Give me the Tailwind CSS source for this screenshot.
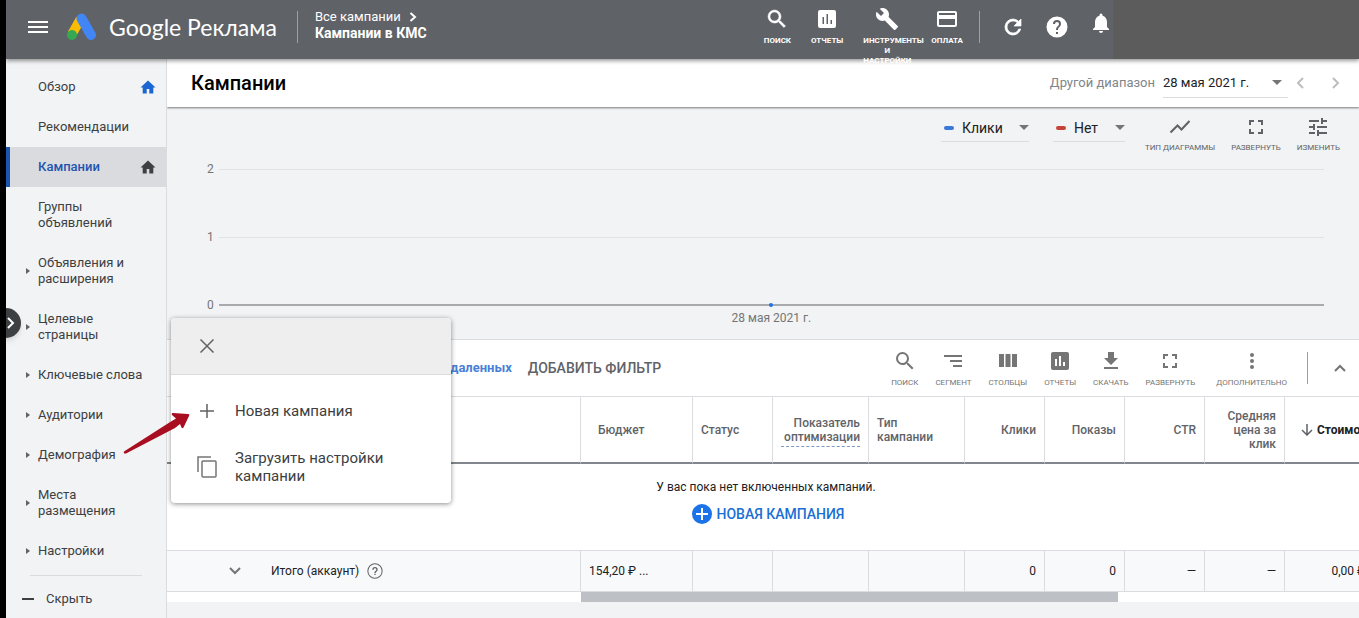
<!DOCTYPE html>
<html lang="ru">
<head>
  <meta charset="UTF-8"/>
  <meta name="viewport" content="width=device-width, initial-scale=1.0"/>
  <title>Кампании</title>
  <script src="https://cdn.jsdelivr.net/npm/@tailwindcss/browser@4"></script>
</head>
<body class="flex min-h-screen overflow-hidden bg-[#f1f3f4] font-['Roboto',sans-serif] text-[#3c4043]">
  <div class="z-40 w-1.5 shrink-0 bg-black"></div>

  <div class="relative flex min-w-0 flex-1 flex-col">
    <!-- Top bar -->
    <header class="relative z-30 flex h-[59px] bg-[#5f6368] text-white shadow-[0_2px_4px_rgba(0,0,0,0.4)]">
      <button aria-label="Меню" class="ml-5 mt-[15px] h-6 w-6">
        <svg viewBox="0 0 24 24" class="h-6 w-6" fill="currentColor"><path d="M2 6h20v2H2zm0 5h20v2H2zm0 5h20v2H2z"/></svg>
      </button>
      <a href="#" class="ml-4 flex h-[54px] items-center gap-3">
        <svg viewBox="0 0 30 28" class="h-7 w-[31px]">
          <path d="M14 6 5.500 21" stroke="#fbbc04" stroke-width="9.500"/>
          <path d="M15 5.500 24.500 22" stroke="#4285f4" stroke-width="10" stroke-linecap="round"/>
          <circle cx="5.500" cy="22" r="5" fill="#34a853"/>
        </svg>
        <span class="font-['Lato','Open_Sans',sans-serif] text-[23px] whitespace-nowrap">Google Реклама</span>
      </a>
      <div class="ml-5 mt-[11px] h-8 w-px bg-[#9aa0a6]"></div>
      <div class="ml-[17px] mt-2 whitespace-nowrap">
        <a href="#" class="flex items-center gap-2 text-[13px] leading-[17px]">Все кампании
          <svg viewBox="0 0 8 10" class="h-2.5 w-2" fill="none" stroke="currentColor" stroke-width="2"><path d="M1.500 1 6 5 1.500 9"/></svg>
        </a>
        <div class="text-sm leading-[17px] font-bold">Кампании в КМС</div>
      </div>

      <div class="ml-auto flex items-start gap-5 pt-[7px] text-[8px] leading-[10px] font-bold">
        <button class="flex flex-col items-center gap-[5px]">
          <svg viewBox="0 0 24 24" class="h-6 w-6" fill="currentColor"><path d="M15.500 14h-.79l-.28-.27A6.470 6.470 0 0 0 16 9.500 6.500 6.500 0 1 0 9.500 16c1.610 0 3.090-.59 4.230-1.570l.27.28v.79l5 4.990L20.490 19l-4.990-5zm-6 0C7.010 14 5 11.990 5 9.500S7.010 5 9.500 5 14 7.010 14 9.500 11.990 14 9.500 14z" stroke="currentColor" stroke-width=".5"/></svg>
          ПОИСК
        </button>
        <button class="flex flex-col items-center gap-[5px]">
          <svg viewBox="0 0 24 24" class="h-6 w-6" fill="currentColor"><path d="M19 3H5a2 2 0 0 0-2 2v14a2 2 0 0 0 2 2h14a2 2 0 0 0 2-2V5a2 2 0 0 0-2-2zM9 17H7.500v-7H9v7zm4 0h-1.500V7H13v10zm4 0h-1.500v-4H17v4z"/></svg>
          ОТЧЕТЫ
        </button>
        <button class="flex w-12 flex-col items-center gap-[5px]">
          <svg viewBox="0 0 24 24" class="h-6 w-6" fill="currentColor"><path d="M22.700 19l-9.100-9.100c.9-2.300.4-5-1.500-6.900-2-2-5-2.400-7.400-1.300L9 6 6 9 1.600 4.700C.4 7.100.9 10.100 2.900 12.100c1.900 1.900 4.600 2.400 6.900 1.500l9.100 9.100c.4.4 1 .4 1.400 0l2.300-2.300c.5-.4.5-1.100.1-1.400z"/></svg>
          <span class="w-12">ИНСТРУМЕНТЫ И НАСТРОЙКИ</span>
        </button>
        <button class="flex flex-col items-center gap-[5px]">
          <svg viewBox="0 0 24 24" class="h-6 w-6" fill="currentColor"><path d="M20 4H4c-1.110 0-1.990.89-1.990 2L2 18c0 1.110.89 2 2 2h16c1.110 0 2-.89 2-2V6c0-1.110-.89-2-2-2zm0 14H4v-6h16v6zm0-10H4V6h16v2z"/></svg>
          ОПЛАТА
        </button>
      </div>
      <div class="ml-4 mt-[11px] h-8 w-px bg-[#9aa0a6]"></div>
      <div class="ml-[21px] flex items-start gap-5 pt-[15px]">
        <button aria-label="Обновить"><svg viewBox="0 0 24 24" class="h-6 w-6" fill="currentColor"><path d="M17.650 6.350A7.958 7.958 0 0 0 12 4a8 8 0 1 0 7.730 10h-2.080A5.990 5.990 0 0 1 12 18a6 6 0 1 1 0-12c1.660 0 3.140.69 4.220 1.780L13 11h7V4l-2.350 2.350z" stroke="currentColor" stroke-width=".7"/></svg></button>
        <button aria-label="Справка"><svg viewBox="0 0 24 24" class="h-6 w-6" fill="currentColor"><path d="M12 1.500a10.500 10.500 0 1 0 0 21 10.500 10.500 0 0 0 0-21zm1 17.500h-2v-2h2v2zm2.070-7.750-.9.920C13.450 12.900 13 13.500 13 15h-2v-.5c0-1.100.45-2.100 1.170-2.830l1.240-1.260c.37-.36.59-.86.59-1.410a2 2 0 1 0-4 0H8a4 4 0 1 1 8 0c0 .88-.36 1.680-.93 2.250z"/></svg></button>
        <button aria-label="Уведомления" class="-mt-1"><svg viewBox="0 0 24 24" class="h-6 w-6" fill="currentColor"><path d="M12 22c1.100 0 2-.9 2-2h-4a2 2 0 0 0 2 2zm6-6v-5c0-3.070-1.640-5.640-4.500-6.320V4a1.500 1.500 0 0 0-3 0v.68C7.630 5.360 6 7.920 6 11v5l-2 2v1h16v-1l-2-2z"/></svg></button>
      </div>
      <div class="w-[246px] shrink-0 bg-[#5c5c5c]"></div>
    </header>

    <div class="flex flex-1">
      <!-- Side navigation -->
      <nav class="relative z-20 w-[161px] shrink-0 border-r border-[#dadce0] pt-2 text-[13px] leading-4">
        <a href="#" class="flex items-center py-3 pl-8 pr-2.5">Обзор
          <svg viewBox="0 0 16 16" class="ml-auto h-4 w-4" fill="#1a66d2"><path d="M8 1.500 .5 8.500h2.200V14.500h4V10h2.600v4.500h4V8.500h2.200z"/></svg>
        </a>
        <a href="#" class="block py-3 pl-8">Рекомендации</a>
        <a href="#" class="flex items-center border-l-4 border-[#1a56b0] bg-[#dadbdf] py-3 pl-7 pr-2.5 font-medium text-[#1f55b0]">Кампании
          <svg viewBox="0 0 16 16" class="ml-auto h-4 w-4" fill="#3c4043"><path d="M8 1.500 .5 8.500h2.200V14.500h4V10h2.600v4.500h4V8.500h2.200z"/></svg>
        </a>
        <a href="#" class="block py-3 pl-8">Группы<br>объявлений</a>
        <a href="#" class="flex items-center gap-2 py-3 pl-5"><svg viewBox="0 0 4 6" class="h-1.5 w-1" fill="#5f6368"><path d="M0 0l4 3-4 3z"/></svg><span>Объявления и<br>расширения</span></a>
        <a href="#" class="flex items-center gap-2 py-3 pl-5"><svg viewBox="0 0 4 6" class="h-1.5 w-1" fill="#5f6368"><path d="M0 0l4 3-4 3z"/></svg><span>Целевые<br>страницы</span></a>
        <a href="#" class="flex items-center gap-2 py-3 pl-5"><svg viewBox="0 0 4 6" class="h-1.5 w-1" fill="#5f6368"><path d="M0 0l4 3-4 3z"/></svg>Ключевые слова</a>
        <a href="#" class="flex items-center gap-2 py-3 pl-5"><svg viewBox="0 0 4 6" class="h-1.5 w-1" fill="#5f6368"><path d="M0 0l4 3-4 3z"/></svg>Аудитории</a>
        <a href="#" class="flex items-center gap-2 py-3 pl-5"><svg viewBox="0 0 4 6" class="h-1.5 w-1" fill="#5f6368"><path d="M0 0l4 3-4 3z"/></svg>Демография</a>
        <a href="#" class="flex items-center gap-2 py-3 pl-5"><svg viewBox="0 0 4 6" class="h-1.5 w-1" fill="#5f6368"><path d="M0 0l4 3-4 3z"/></svg><span>Места<br>размещения</span></a>
        <a href="#" class="flex items-center gap-2 py-3 pl-5"><svg viewBox="0 0 4 6" class="h-1.5 w-1" fill="#5f6368"><path d="M0 0l4 3-4 3z"/></svg>Настройки</a>
        <hr class="ml-6 mr-6 mt-1 border-[#dadce0]">
        <button class="flex items-center gap-3 pl-4 pt-[15px]"><span class="h-0.5 w-3 bg-[#3c4043]"></span>Скрыть</button>

        <!-- Drawer handle -->
        <button aria-label="Открыть панель" class="absolute -left-[15px] top-[249px] flex h-[30px] w-[30px] items-center justify-end rounded-full bg-[#3c4043] pr-1.5 text-white shadow-md">
          <svg viewBox="0 0 8 12" class="h-3 w-2" fill="none" stroke="currentColor" stroke-width="2"><path d="M1 1l5 5-5 5"/></svg>
        </button>
        <!-- Pointer to the new campaign item -->
        <svg viewBox="0 0 68 46" class="pointer-events-none absolute left-[116px] top-[351px] h-[46px] w-[68px]" fill="#a80d20"><path d="M2 41.500 49 11.500 54 8.500 50 5Q49 3 51 3L66 4Q68 4 67 6L61.500 17.500Q60.500 19 59.500 17.500L58 14 53 18 4 43.500Q1 44 2 41.500z"/></svg>
      </nav>

      <main class="relative z-10 flex min-w-0 flex-1 flex-col overflow-hidden">
        <!-- Title bar -->
        <div class="relative z-10 flex h-12 items-center bg-white pl-6 pr-4 shadow-[0_1px_2px_rgba(0,0,0,0.5)]">
          <h1 class="text-xl font-medium text-black">Кампании</h1>
          <label for="range" class="ml-auto text-[13px] text-[#80868b]">Другой диапазон</label>
          <div class="relative ml-2 w-[125px]">
            <select id="range" class="h-[30px] w-full appearance-none border-b border-[#dadce0] text-[13px] text-[#202124]"><option>28 мая 2021 г.</option></select>
            <svg viewBox="0 0 10 5" class="pointer-events-none absolute right-1.5 top-3 h-[5px] w-2.5" fill="#757575"><path d="M0 0h10L5 5z"/></svg>
          </div>
          <button aria-label="Назад" class="ml-2"><svg viewBox="0 0 8 12" class="h-3 w-2" fill="none" stroke="#bdbdbd" stroke-width="2"><path d="M7 1 2 6l5 5"/></svg></button>
          <button aria-label="Вперед" class="ml-7 mr-[3px]"><svg viewBox="0 0 8 12" class="h-3 w-2" fill="none" stroke="#bdbdbd" stroke-width="2"><path d="M1 1l5 5-5 5"/></svg></button>
        </div>

        <!-- Chart -->
        <section class="h-[233px] border-b border-[#dadce0]">
          <div class="flex h-[54px] items-start justify-end gap-4 pr-[19px] text-[#5f6368]">
            <div class="relative mr-2 mt-2 w-[88px]">
              <span class="absolute left-[3px] top-[11px] h-1 w-2.5 rounded-full bg-[#3c78d8]"></span>
              <select aria-label="Первый показатель" class="h-[27px] w-full appearance-none border-b border-[#dadce0] pl-[21px] text-sm text-[#202124]"><option>Клики</option></select>
              <svg viewBox="0 0 10 5" class="pointer-events-none absolute right-0 top-2.5 h-[5px] w-2.5" fill="#757575"><path d="M0 0h10L5 5z"/></svg>
            </div>
            <div class="relative mr-1 mt-2 w-[72px]">
              <span class="absolute left-[3px] top-[11px] h-1 w-2.5 rounded-full bg-[#c5443a]"></span>
              <select aria-label="Второй показатель" class="h-[27px] w-full appearance-none border-b border-[#dadce0] pl-[21px] text-sm text-[#202124]"><option>Нет</option></select>
              <svg viewBox="0 0 10 5" class="pointer-events-none absolute right-0 top-2.5 h-[5px] w-2.5" fill="#757575"><path d="M0 0h10L5 5z"/></svg>
            </div>
            <button class="flex flex-col items-center gap-1 pt-2 text-[8px] leading-[10px]">
              <svg viewBox="0 0 24 24" class="h-6 w-6" fill="none" stroke="currentColor" stroke-width="2"><path d="M2.500 17.500 9.500 10.500l4 4L21.500 6"/></svg>
              ТИП ДИАГРАММЫ
            </button>
            <button class="flex flex-col items-center gap-1 pt-2 text-[8px] leading-[10px]">
              <svg viewBox="0 0 24 24" class="h-6 w-6" fill="currentColor"><path d="M7 14H5v5h5v-2H7v-3zm-2-4h2V7h3V5H5v5zm12 7h-3v2h5v-5h-2v3zM14 5v2h3v3h2V5h-5z"/></svg>
              РАЗВЕРНУТЬ
            </button>
            <button class="flex flex-col items-center gap-1 pt-2 text-[8px] leading-[10px]">
              <svg viewBox="0 0 24 24" class="h-6 w-6" fill="currentColor"><path d="M3 17v2h6v-2H3zM3 5v2h10V5H3zm10 16v-2h8v-2h-8v-2h-2v6h2zM7 9v2H3v2h4v2h2V9H7zm14 4v-2H11v2h10zm-6-4h2V7h4V5h-4V3h-2v6z"/></svg>
              ИЗМЕНИТЬ
            </button>
          </div>
          <div class="flex flex-col gap-[52px] pl-10 pr-[35px] text-xs leading-4 text-[#757575]">
            <div class="flex items-center gap-[5px]">2<div class="h-px flex-1 bg-[#e0e2e4]"></div></div>
            <div class="flex items-center gap-[5px]">1<div class="h-px flex-1 bg-[#e0e2e4]"></div></div>
            <div class="flex items-center gap-[5px]">0
              <div class="relative h-0.5 flex-1 bg-[#a8aaad]">
                <span class="absolute -top-px left-1/2 h-1 w-1 -translate-x-1/2 rounded-full bg-[#1a73e8]"></span>
                <span class="absolute left-1/2 top-1.5 -translate-x-1/2 whitespace-nowrap">28 мая 2021 г.</span>
              </div>
            </div>
          </div>
        </section>

        <!-- Table toolbar -->
        <section class="flex h-14 bg-white pl-[277px] text-[#757575]">
          <a href="#" class="self-center text-[13px] font-bold text-[#4a7fd6]">удаленных</a>
          <button class="ml-4 text-sm font-medium whitespace-nowrap text-[#5f6368]">ДОБАВИТЬ ФИЛЬТР</button>
          <div class="ml-auto flex items-start gap-[17px] pt-[9px] text-[8px] leading-[10px]">
            <button class="flex flex-col items-center gap-[5px]">
              <svg viewBox="0 0 24 24" class="h-6 w-6" fill="currentColor"><path d="M15.500 14h-.79l-.28-.27A6.470 6.470 0 0 0 16 9.500 6.500 6.500 0 1 0 9.500 16c1.610 0 3.090-.59 4.230-1.570l.27.28v.79l5 4.990L20.490 19l-4.990-5zm-6 0C7.010 14 5 11.990 5 9.500S7.010 5 9.500 5 14 7.010 14 9.500 11.990 14 9.500 14z"/></svg>
              ПОИСК
            </button>
            <button class="flex flex-col items-center gap-[5px]">
              <svg viewBox="0 0 24 24" class="h-6 w-6" fill="currentColor"><path d="M3 6h18v2H3zm6 5h12v2H9zm3 5h9v2h-9z"/></svg>
              СЕГМЕНТ
            </button>
            <button class="flex flex-col items-center gap-[5px]">
              <svg viewBox="0 0 24 24" class="h-6 w-6" fill="currentColor"><path d="M3 5h5v13H3zm6.500 0h5v13h-5zM16 5h5v13h-5z"/></svg>
              СТОЛБЦЫ
            </button>
            <button class="flex flex-col items-center gap-[5px]">
              <svg viewBox="0 0 24 24" class="h-6 w-6" fill="currentColor"><path d="M19 3H5a2 2 0 0 0-2 2v14a2 2 0 0 0 2 2h14a2 2 0 0 0 2-2V5a2 2 0 0 0-2-2zM9 17H7v-7h2v7zm4 0h-2V7h2v10zm4 0h-2v-4h2v4z"/></svg>
              ОТЧЕТЫ
            </button>
            <button class="flex flex-col items-center gap-[5px]">
              <svg viewBox="0 0 24 24" class="h-6 w-6" fill="currentColor"><path d="M19 9h-4V3H9v6H5l7 7 7-7zM5 18v2h14v-2H5z"/></svg>
              СКАЧАТЬ
            </button>
            <button class="flex flex-col items-center gap-[5px]">
              <svg viewBox="0 0 24 24" class="h-6 w-6" fill="currentColor"><path d="M7 14H5v5h5v-2H7v-3zm-2-4h2V7h3V5H5v5zm12 7h-3v2h5v-5h-2v3zM14 5v2h3v3h2V5h-5z"/></svg>
              РАЗВЕРНУТЬ
            </button>
            <button class="ml-1 flex flex-col items-center gap-[5px]">
              <svg viewBox="0 0 24 24" class="h-6 w-6" fill="currentColor"><circle cx="12" cy="6" r="2"/><circle cx="12" cy="12" r="2"/><circle cx="12" cy="18" r="2"/></svg>
              ДОПОЛНИТЕЛЬНО
            </button>
          </div>
          <div class="ml-5 mt-3 h-8 w-px bg-[#9aa0a6]"></div>
          <button aria-label="Свернуть" class="ml-[26px] mr-[13px]"><svg viewBox="0 0 12 8" class="h-2 w-3" fill="none" stroke="currentColor" stroke-width="2"><path d="M1 7l5-5 5 5"/></svg></button>
        </section>

        <table class="w-[calc(100%+22px)] table-fixed border-separate border-spacing-0 text-xs">
          <colgroup>
            <col>
            <col class="w-28">
            <col class="w-20">
            <col class="w-24">
            <col class="w-24">
            <col class="w-20">
            <col class="w-20">
            <col class="w-20">
            <col class="w-20">
            <col class="w-24">
          </colgroup>
          <thead class="bg-white leading-[14px] text-[#5f6368]">
            <tr class="h-[68px] *:border-t *:border-b-2 *:border-t-[#dadce0] *:border-b-[#80868b] *:border-r-[#dadce0] *:px-2 *:font-medium">
              <th class="border-r"></th>
              <th class="border-r text-left"><span class="pl-[9px]">Бюджет</span></th>
              <th class="border-r text-left">Статус</th>
              <th class="border-r text-right"><span class="mt-1 inline-block border-b border-dashed border-[#7b9cc0] pb-0.5">Показатель оптимизации</span></th>
              <th class="border-r text-left">Тип<br>кампании</th>
              <th class="border-r text-right">Клики</th>
              <th class="border-r text-right">Показы</th>
              <th class="border-r text-right">CTR</th>
              <th class="border-r text-right">Средняя<br>цена за<br>клик</th>
              <th class="text-[#202124]">
                <div class="flex items-center gap-1 pl-2">
                  <svg viewBox="0 0 12 12" class="h-3 w-3 shrink-0" fill="none" stroke="#5f6368" stroke-width="1.500"><path d="M6 0v11M1 6l5 5 5-5"/></svg>
                  <span class="font-bold">Стоимость</span>
                </div>
              </th>
            </tr>
          </thead>
          <tbody class="text-[#202124]">
            <tr class="h-[86px] bg-white">
              <td colspan="10" class="pr-8 pt-[14px] text-center align-top">
                <p class="pl-4 leading-[18px]">У вас пока нет включенных кампаний.</p>
                <button class="ml-5 mt-2 inline-flex items-center gap-[5px] text-sm leading-5 font-medium text-[#1a6fd4]">
                  <svg viewBox="0 0 20 20" class="h-5 w-5"><circle cx="10" cy="10" r="10" fill="#1a73e8"/><path d="M10 4v12M4 10h12" stroke="#fff" stroke-width="2"/></svg>
                  НОВАЯ КАМПАНИЯ
                </button>
              </td>
            </tr>
            <tr class="h-[42px] bg-[#f8f9fa] *:border-y *:border-[#dadce0] *:px-2">
              <td class="border-r">
                <div class="flex items-center pl-[54px]">
                  <button aria-label="Развернуть итоги"><svg viewBox="0 0 12 8" class="h-2 w-3" fill="none" stroke="#757575" stroke-width="2"><path d="M1 1l5 5 5-5"/></svg></button>
                  <span class="ml-[30px]">Итого (аккаунт)</span>
                  <svg viewBox="0 0 24 24" class="ml-2 h-4 w-4" fill="#5f6368"><path d="M11 18h2v-2h-2v2zm1-17.500a11.500 11.500 0 1 0 0 23 11.500 11.500 0 0 0 0-23zm0 21.500a10 10 0 1 1 0-20 10 10 0 0 1 0 20zM12 6a4 4 0 0 0-4 4h2a2 2 0 1 1 4 0c0 2-3 1.750-3 5h2c0-2.250 3-2.500 3-5a4 4 0 0 0-4-4z"/></svg>
                </div>
              </td>
              <td class="border-r">154,20 ₽ ...</td>
              <td class="border-r"></td>
              <td class="border-r"></td>
              <td class="border-r"></td>
              <td class="border-r text-right">0</td>
              <td class="border-r text-right">0</td>
              <td class="border-r text-right">—</td>
              <td class="border-r text-right">—</td>
              <td class="text-right"><span class="pr-2">0,00 ₽</span></td>
            </tr>
          </tbody>
        </table>
        <div class="flex h-2.5 bg-white pl-[414px]">
          <div class="w-[69%] bg-[#bdc1c6]"></div>
        </div>

        <!-- Create menu -->
        <div class="absolute left-1 top-[259px] z-20 w-[280px] overflow-hidden rounded-sm bg-white text-[15px] leading-[18px] text-[#3c4043] shadow-[0_1px_5px_rgba(0,0,0,0.45)]">
          <div class="flex h-[57px] items-center border-b border-[#dadce0] bg-[#eeeeee] pl-[29px]">
            <button aria-label="Закрыть"><svg viewBox="0 0 14 14" class="h-3.5 w-3.5" fill="none" stroke="#616161" stroke-width="1.500"><path d="M.5.5l13 13M13.500.5l-13 13"/></svg></button>
          </div>
          <button class="mt-2 flex h-14 w-full items-center gap-[21px] pl-[29px] text-left">
            <svg viewBox="0 0 14 14" class="h-3.5 w-3.5" stroke="#616161" stroke-width="1.500"><path d="M7 0v14M0 7h14"/></svg>
            Новая кампания
          </button>
          <button class="mb-2 flex h-14 w-full items-center gap-[18px] pl-[26px] text-left">
            <svg viewBox="0 0 20 22" class="h-[22px] w-5" fill="none" stroke="#757575" stroke-width="1.500"><path d="M1 16V1h13"/><rect x="5" y="5" width="14" height="16" rx="1"/></svg>
            <span>Загрузить настройки<br>кампании</span>
          </button>
        </div>
      </main>
    </div>
  </div>
</body>
</html>
